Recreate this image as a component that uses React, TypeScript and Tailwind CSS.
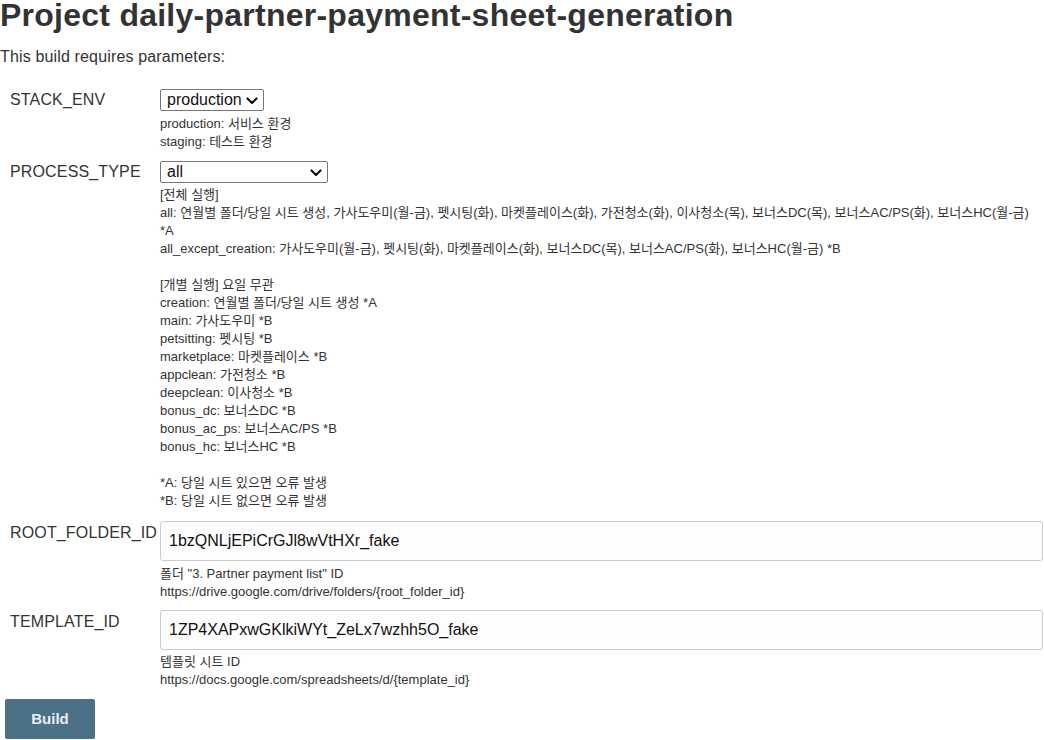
import React from "react";

const font = "font-['Liberation_Sans','Noto_Sans_CJK_KR',sans-serif]";

function Chevron() {
  return (
    <svg width="12" height="8" viewBox="0 0 12 8" className="pointer-events-none absolute right-[6px] top-[8px]">
      <path d="M1.5 1.5 L6 6 L10.5 1.5" fill="none" stroke="#111" strokeWidth="2.2" strokeLinecap="round" strokeLinejoin="round" />
    </svg>
  );
}

function Select({ value, options, width }: { value: string; options: string[]; width: string }) {
  return (
    <div className={`relative h-[22px] ${width}`}>
      <select
        defaultValue={value}
        className={`block h-[22px] w-full appearance-none rounded-[2px] border border-[#767676] bg-white pl-[6px] text-[16px] leading-[20px] text-[#111] outline-none ${font}`}
      >
        {options.map((o) => (
          <option key={o}>{o}</option>
        ))}
      </select>
      <Chevron />
    </div>
  );
}

function Lines({ lines, className }: { lines: string[]; className: string }) {
  return (
    <div className={`text-[13px] leading-[18px] text-[#333] ${className}`}>
      {lines.map((l, i) => (
        <div key={i} className="h-[18px] whitespace-nowrap">
          {l}
        </div>
      ))}
    </div>
  );
}

const processLines = [
  "[전체 실행]",
  "all: 연월별 폴더/당일 시트 생성, 가사도우미(월-금), 펫시팅(화), 마켓플레이스(화), 가전청소(화), 이사청소(목), 보너스DC(목), 보너스AC/PS(화), 보너스HC(월-금)",
  "*A",
  "all_except_creation: 가사도우미(월-금), 펫시팅(화), 마켓플레이스(화), 보너스DC(목), 보너스AC/PS(화), 보너스HC(월-금) *B",
  "",
  "[개별 실행] 요일 무관",
  "creation: 연월별 폴더/당일 시트 생성 *A",
  "main: 가사도우미 *B",
  "petsitting: 펫시팅 *B",
  "marketplace: 마켓플레이스 *B",
  "appclean: 가전청소 *B",
  "deepclean: 이사청소 *B",
  "bonus_dc: 보너스DC *B",
  "bonus_ac_ps: 보너스AC/PS *B",
  "bonus_hc: 보너스HC *B",
  "",
  "*A: 당일 시트 있으면 오류 발생",
  "*B: 당일 시트 없으면 오류 발생",
];

const label = "w-[160px] shrink-0 pl-[10px] text-[16px] leading-[22px] tracking-[0.15px]";
const textInput = `block h-[40px] w-full rounded-[3px] border border-[#cccccc] bg-[#fdfdfd] px-[8px] text-[16px] text-[#111] outline-none ${font}`;

export default function App() {
  return (
    <div className={`h-[740px] w-[1044px] overflow-hidden bg-white text-[#333] ${font}`}>
      <h1 className="m-0 text-[32px] leading-[30px] font-bold tracking-[0.25px] text-[#333]">
        Project daily-partner-payment-sheet-generation
      </h1>
      <p className="mt-[18px] text-[16px] leading-[18px] tracking-[0.15px]">This build requires parameters:</p>

      <div className="mt-[23px] flex flex-col pr-[1px]">
        <div className="flex">
          <div className={label}>STACK_ENV</div>
          <div className="flex-1">
            <Select value="production" options={["production", "staging"]} width="w-[104px]" />
            <Lines className="mt-[4px]" lines={["production: 서비스 환경", "staging: 테스트 환경"]} />
          </div>
        </div>

        <div className="mt-[10px] flex">
          <div className={label}>PROCESS_TYPE</div>
          <div className="flex-1">
            <Select
              value="all"
              options={["all", "all_except_creation", "creation", "main", "petsitting", "marketplace", "appclean", "deepclean", "bonus_dc", "bonus_ac_ps", "bonus_hc"]}
              width="w-[168px]"
            />
            <Lines className="mt-[3px]" lines={processLines} />
          </div>
        </div>

        <div className="mt-[11px] flex">
          <div className={`${label} pt-[1px]`}>ROOT_FOLDER_ID</div>
          <div className="flex-1">
            <input defaultValue="1bzQNLjEPiCrGJl8wVtHXr_fake" className={textInput} />
            <Lines
              className="mt-[4px]"
              lines={['폴더 "3. Partner payment list" ID', "https://drive.google.com/drive/folders/{root_folder_id}"]}
            />
          </div>
        </div>

        <div className="mt-[9px] flex">
          <div className={`${label} pt-[1px]`}>TEMPLATE_ID</div>
          <div className="flex-1">
            <input defaultValue="1ZP4XAPxwGKlkiWYt_ZeLx7wzhh5O_fake" className={textInput} />
            <Lines className="mt-[3px]" lines={["템플릿 시트 ID", "https://docs.google.com/spreadsheets/d/{template_id}"]} />
          </div>
        </div>

        <div className="mt-[10px] pl-[5px]">
          <button
            className={`block h-[40px] w-[90px] rounded-[2px] bg-[#4b7186] text-[15px] font-bold text-[#e8eef2] ${font}`}
          >
            Build
          </button>
        </div>
      </div>
    </div>
  );
}
